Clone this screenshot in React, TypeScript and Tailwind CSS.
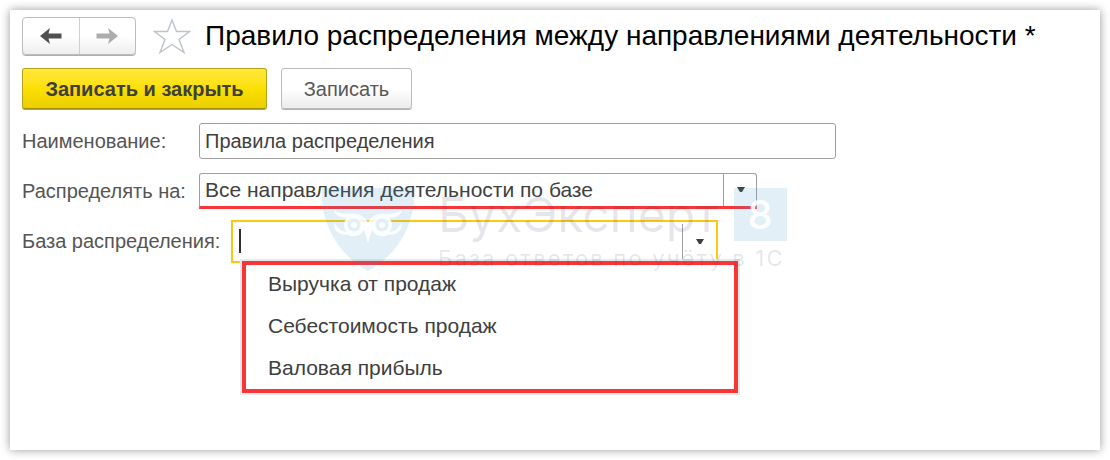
import React, { useState } from "react";

const bases = ["Выручка от продаж", "Себестоимость продаж", "Валовая прибыль"];

const Arrow = ({ back }: { back?: boolean }) => (
  <svg viewBox="0 0 22 16" className="h-4 w-[22px]" fill="currentColor">
    {back ? (
      <path d="M0 8 10 0 8.500 5.500H21.500V10.500H8.500L10 16Z" />
    ) : (
      <path d="M22 8 12 0 13.500 5.500H0.500V10.500H13.500L12 16Z" />
    )}
  </svg>
);

const Caret = () => (
  <svg viewBox="0 0 8 5" className="h-[5px] w-2" fill="#404040">
    <path d="M0 0H8L5 5H3Z" />
  </svg>
);

const Toolbar = () => (
  <div className="mt-[13px] flex gap-[14px]">
    <button
      type="submit"
      className="h-[41px] min-w-[245px] rounded-[3px] border border-[#b8a21c] border-b-[#a38e10] bg-linear-to-b from-[#ffe838] via-[#fce000] to-[#ebce00] px-5 font-bold text-[#404040] shadow-[0_1px_0_#b9a62a]"
    >
      Записать и закрыть
    </button>
    <button
      type="button"
      className="h-[41px] min-w-[131px] rounded-[3px] border border-[#bcbcbc] bg-linear-to-b from-white from-50% to-[#ececec] px-5 text-[#585858] shadow-[0_1px_0_#b0b0b0]"
    >
      Записать
    </button>
  </div>
);

const Watermark = () => (
  <div
    aria-hidden="true"
    className="pointer-events-none absolute left-[300px] top-[120px] z-20 flex font-[Inter,sans-serif] text-[#35355a]/12"
  >
    <svg viewBox="0 0 92 83" className="h-[83px] w-[92px]">
      <path
        d="M0 0H92V14C88 46 72 68 46 83C20 68 4 46 0 14Z"
        fill="#3a96cc"
        fillOpacity="0.15"
      />
      <g fill="#fff" fillOpacity="0.85">
        <path d="M12 22C18 27 26 25 34 26C41 27 45 31 46 35C47 31 51 27 58 26C66 25 74 27 80 22C79 28 73 30 67 30C71 33 71 41 67 44C74 43 78 39 79 34C82 42 76 47 66 47C60 50 52 47 50 42L46 55 42 42C40 47 32 50 26 47C16 47 10 42 13 34C14 39 18 43 25 44C21 41 21 33 25 30C19 30 13 28 12 22Z" />
      </g>
      <g fill="#e1eff8">
        <circle cx="32" cy="37" r="6.500" />
        <circle cx="60" cy="37" r="6.500" />
      </g>
      <g fill="#fff" fillOpacity="0.9">
        <circle cx="32" cy="37" r="3" />
        <circle cx="60" cy="37" r="3" />
      </g>
    </svg>
    <div className="ml-6">
      <div className="flex h-[53px] items-center gap-4">
        <span className="text-[48px] leading-[53px]">БухЭксперт</span>
        <span className="flex size-[53px] items-center justify-center bg-[#3a96cc]/15 text-[40px] font-medium text-white/90">
          8
        </span>
      </div>
      <p className="mt-[5px] text-[22px] leading-6 tracking-widest">
        База ответов по учёту в 1С
      </p>
    </div>
  </div>
);

const App = () => {
  const [name, setName] = useState("Правила распределения");
  const [base, setBase] = useState("");
  const [isOpen, setIsOpen] = useState(true);

  const selectBase = (value: string) => {
    setBase(value);
    setIsOpen(false);
  };

  return (
    <div className="flex min-h-screen bg-white p-2.5 font-['Liberation_Sans',Arial,sans-serif] text-[20px] text-[#404040]">
      <main className="min-w-0 flex-1 bg-white px-3 pt-[7px] shadow-[0_0_9px_rgba(0,0,0,0.4)]">
        <header className="flex items-center">
          <div className="flex h-[38px] w-[114px] shrink-0 rounded-[4px] border border-[#bcbcbc] bg-linear-to-b from-white from-50% to-[#eeeeee] shadow-[0_1px_0_#b0b0b0]">
            <button
              type="button"
              aria-label="Назад"
              className="flex flex-1 items-center justify-center border-r border-[#cfcfcf] text-[#505050]"
            >
              <Arrow back />
            </button>
            <button
              type="button"
              aria-label="Вперед"
              className="flex flex-1 items-center justify-center text-[#acacac]"
            >
              <Arrow />
            </button>
          </div>
          <button type="button" aria-label="В избранное" className="ml-[17px] shrink-0">
            <svg
              viewBox="0 0 38 36"
              className="h-9 w-[38px]"
              fill="#fff"
              stroke="#bcc4cb"
              strokeWidth="1.400"
            >
              <path d="M19 2 23.500 13.500H36.500L26 21.500 31 34.500 19 26.500 7 34.500 12 21.500 1.500 13.500H14.500Z" />
            </svg>
          </button>
          <h1 className="ml-3.5 text-[28px] leading-[38px] text-black">
            Правило распределения между направлениями деятельности *
          </h1>
        </header>

        <form className="relative" onSubmit={(e) => e.preventDefault()}>
          <Toolbar />

          <div className="mt-[7px]">
            <div className="flex h-[50px] items-center gap-[5px]">
              <label htmlFor="name" className="min-w-[172px] text-[#555555]">
                Наименование:
              </label>
              <input
                id="name"
                value={name}
                onChange={(e) => setName(e.target.value)}
                className="h-9 w-full max-w-[637px] rounded-[3px] border border-[#a0a0a0] px-[5px] outline-none"
              />
            </div>

            <div className="flex h-[50px] items-center gap-[5px]">
              <label htmlFor="target" className="min-w-[172px] text-[#555555]">
                Распределять на:
              </label>
              <div className="relative w-full max-w-[558px]">
                <select
                  id="target"
                  className="block h-9 w-full appearance-none rounded-t-[3px] border border-b-[3px] border-[#a0a0a0] border-b-[#fa3538] bg-white px-[5px] text-[21px] outline-none"
                >
                  <option>Все направления деятельности по базе</option>
                </select>
                <span className="pointer-events-none absolute bottom-[3px] right-0 top-0 flex w-[34px] items-center justify-center border-l border-[#a0a0a0]">
                  <Caret />
                </span>
              </div>
            </div>

            <div className="flex h-[50px] items-center gap-[5px]">
              <label htmlFor="base" className="min-w-[204px] text-[#555555]">
                База распределения:
              </label>
              <div className="relative flex h-[43px] w-full max-w-[487px] border-2 border-[#fdc810] bg-white">
                <input
                  id="base"
                  role="combobox"
                  aria-expanded={isOpen}
                  aria-controls="base-list"
                  value={base}
                  onChange={(e) => setBase(e.target.value)}
                  className="min-w-0 flex-1 px-[5px] outline-none"
                />
                {/* text cursor of the focused field */}
                {!base && (
                  <span className="pointer-events-none absolute left-1.5 top-[7px] h-6 w-[2px] bg-[#303030]" />
                )}
                <button
                  type="button"
                  aria-label="Показать список"
                  onClick={() => setIsOpen(!isOpen)}
                  className="my-0.5 flex w-[34px] items-center justify-center border-l border-[#a0a0a0]"
                >
                  <Caret />
                </button>
                {isOpen && (
                  <ul
                    id="base-list"
                    role="listbox"
                    className="absolute left-[9px] top-[39px] z-10 flex w-[496px] flex-col gap-[2px] border-4 border-[#fa3538] bg-white text-[21px] shadow-[0_0_0_2px_#e4e9ea]"
                  >
                    {bases.map((item) => (
                      <li
                        key={item}
                        role="option"
                        aria-selected={item === base}
                        onClick={() => selectBase(item)}
                        className="h-10 cursor-default px-[22px] leading-[38px] hover:bg-[#fff7c9]"
                      >
                        {item}
                      </li>
                    ))}
                  </ul>
                )}
              </div>
            </div>
          </div>

          <Watermark />
        </form>
      </main>
    </div>
  );
};

export default App;
